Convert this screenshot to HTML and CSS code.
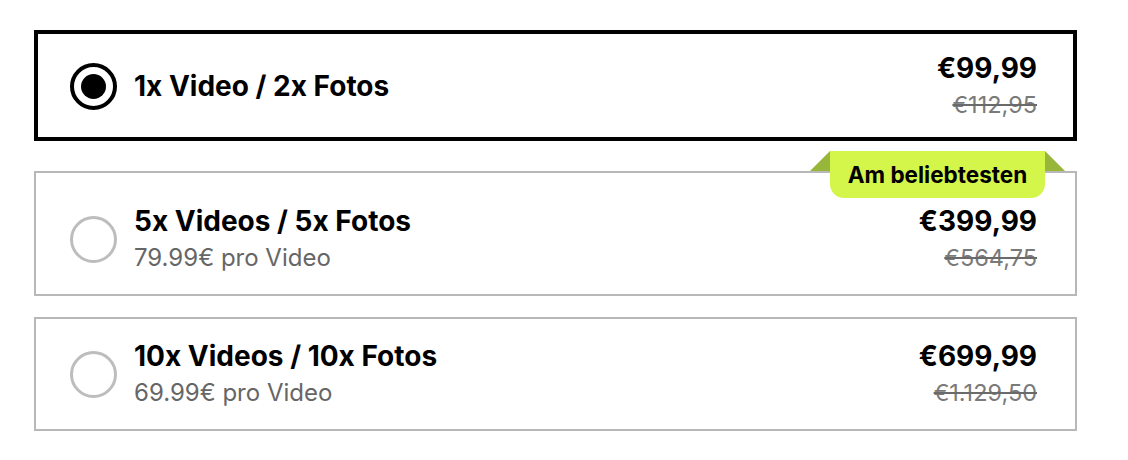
FILE: index.html
```html
<!DOCTYPE html>
<html lang="de">
<head>
<meta charset="utf-8">
<title>Pakete</title>
<link rel="stylesheet" href="styles.css">
</head>
<body>
<div class="options">
  <label class="card selected">
    <span class="radio"><span class="dot"></span></span>
    <span class="info">
      <span class="title">1x Video / 2x Fotos</span>
    </span>
    <span class="price">
      <span class="now">€99,99</span>
      <span class="was">€112,95</span>
    </span>
  </label>

  <label class="card featured">
    <span class="badge">Am beliebtesten</span>
    <span class="radio"></span>
    <span class="info">
      <span class="title">5x Videos / 5x Fotos</span>
      <span class="sub">79.99€ pro Video</span>
    </span>
    <span class="price">
      <span class="now">€399,99</span>
      <span class="was">€564,75</span>
    </span>
  </label>

  <label class="card">
    <span class="radio"></span>
    <span class="info">
      <span class="title">10x Videos / 10x Fotos</span>
      <span class="sub">69.99€ pro Video</span>
    </span>
    <span class="price">
      <span class="now">€699,99</span>
      <span class="was">€1.129,50</span>
    </span>
  </label>
</div>
</body>
</html>
```

FILE: styles.css
```css
* { box-sizing: border-box; }

html, body {
  margin: 0;
  background: #ffffff;
}

body {
  font-family: "Inter", "Liberation Sans", sans-serif;
  color: #000;
  padding: 30px 51px 0 34px;
}

.options {
  display: flex;
  flex-direction: column;
  gap: 21px;
}

.card {
  position: relative;
  display: flex;
  align-items: center;
  border: 2px solid #b8b8b8;
  padding: 18px 38px 18px 34px;
  background: #fff;
}

.card.selected {
  border: 4px solid #000;
  padding: 15px 36px 14px 32px;
}

.card.featured {
  margin-top: 9px;
  padding-top: 29px;
  padding-bottom: 18px;
}

.radio {
  flex: none;
  width: 47px;
  height: 47px;
  border-radius: 50%;
  border: 3px solid #bdbdbd;
  display: flex;
  align-items: center;
  justify-content: center;
  margin-right: 17px;
}

.selected .radio {
  border: 4px solid #000;
}

.dot {
  width: 25px;
  height: 25px;
  border-radius: 50%;
  background: #000;
}

.info {
  flex: 1;
  display: flex;
  flex-direction: column;
}

.title {
  font-size: 28px;
  font-weight: 700;
  line-height: 38px;
}

.sub {
  font-size: 24px;
  line-height: 36px;
  color: #666;
}

.price {
  display: flex;
  flex-direction: column;
  align-items: flex-end;
}

.now {
  font-size: 28px;
  font-weight: 700;
  line-height: 38px;
}

.was {
  font-size: 23.5px;
  line-height: 36px;
  color: #7a7a7a;
  text-decoration: line-through;
  text-decoration-color: #6a6a6a;
}

.badge {
  position: absolute;
  top: -22px;
  right: 30px;
  width: 215px;
  height: 47px;
  background: #d4f54a;
  border-radius: 0 0 14px 14px;
  font-size: 22.5px;
  font-weight: 700;
  display: flex;
  align-items: center;
  justify-content: center;
}

.badge::before,
.badge::after {
  content: "";
  position: absolute;
  top: 0;
  width: 0;
  height: 0;
  border-style: solid;
}

.badge::before {
  left: -20px;
  border-width: 0 0 20px 20px;
  border-color: transparent transparent #98b63a transparent;
}

.badge::after {
  right: -20px;
  border-width: 0 20px 20px 0;
  border-color: transparent transparent #98b63a transparent;
}
```
